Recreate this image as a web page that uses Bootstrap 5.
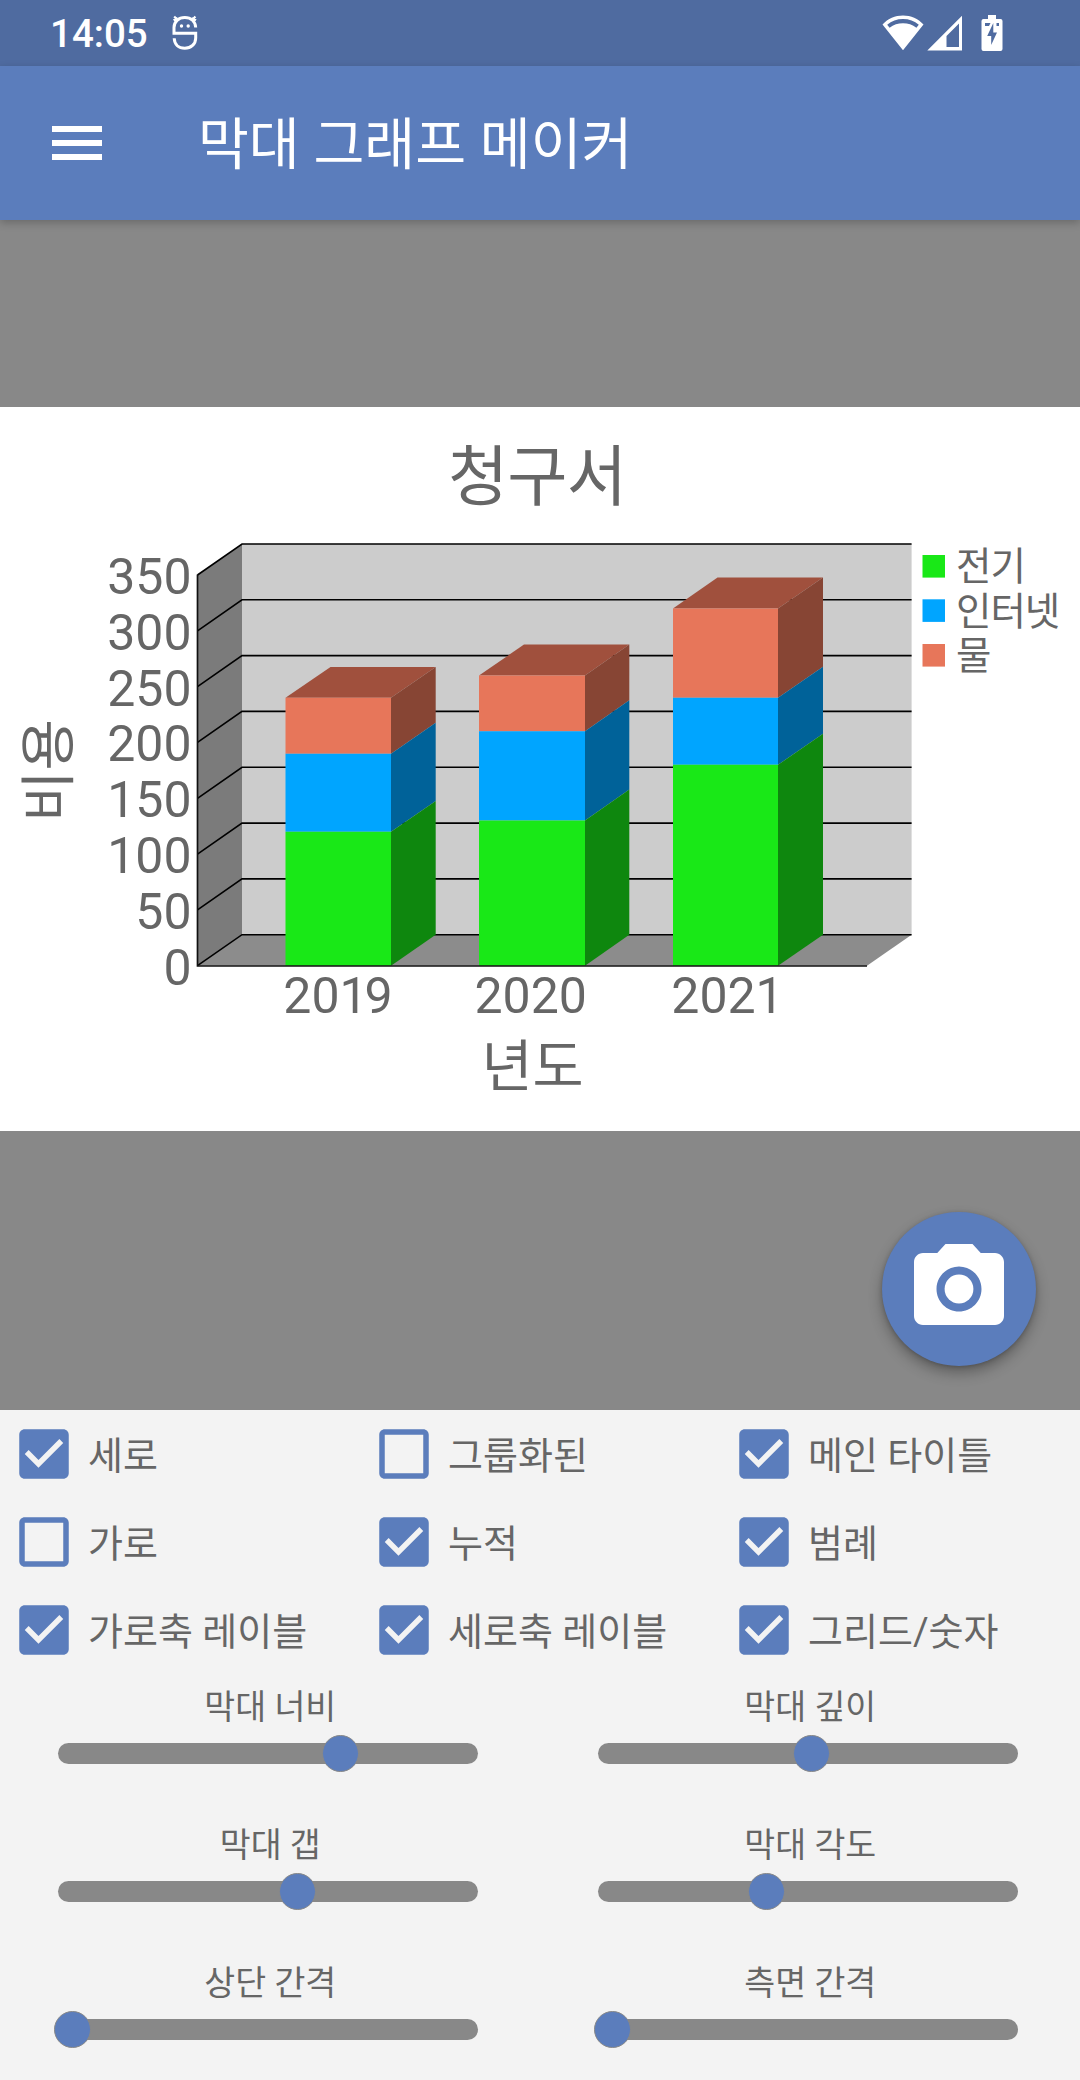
<!DOCTYPE html>
<html lang="ko">
<head>
<meta charset="utf-8">
<meta name="viewport" content="width=device-width, initial-scale=1">
<title>막대 그래프 메이커</title>
<link href="https://cdn.jsdelivr.net/npm/bootstrap@5.3.0/dist/css/bootstrap.min.css" rel="stylesheet">
<style>
  :root { --brand: #5b7dbc; --brand-dark: #4f6ba0; --ink: #666; --track: #888; }
  body { font-family: Roboto, "Noto Sans CJK KR", sans-serif; color: var(--ink); background: #f3f3f3; }
  .status-bar { height: 66px; background: var(--brand-dark); padding: 0 77px 0 50px; }
  .clock { font-size: 38.5px; font-weight: 500; line-height: 66px; padding-top: 2px; width: 122px; }
  .status-icons { gap: 3px; }
  .app-bar { height: 154px; background: var(--brand); padding: 0 52px; box-shadow: 0 3px 8px rgba(0,0,0,.22); z-index: 2; }
  .app-title { font-size: 55.3px; line-height: 80px; margin-left: 96px; padding-top: 5px; font-weight: 400; }
  .stage { height: 1190px; background: var(--track); padding-top: 187px; }
  .chart-text { fill: var(--ink); }
  .fab { right: 44px; bottom: 44px; width: 154px; height: 154px; background: var(--brand); box-shadow: 0 7px 14px rgba(0,0,0,.3), 0 1px 4px rgba(0,0,0,.2); }
  .panel { height: 670px; }
  .option { height: 88px; padding-left: 11px; font-size: 38px; line-height: 60px; gap: 11px; }
  .option svg { fill: var(--brand); flex: none; }
  .option span { padding-top: 3px; }
  .slider-cell { height: 138px; padding: 9px 62.5px 0 58px; }
  .slider-name { font-size: 33.6px; line-height: 50px; margin-left: 5px; }
  .slider-track { height: 21px; background: var(--track); border-radius: 11px; margin-top: 10px; }
  .slider-thumb { width: 37px; height: 37px; top: -8.5px; margin-left: -18.5px; background: var(--brand); border: 1px solid #888; }
</style>
</head>
<body>
<header>
  <div class="status-bar d-flex align-items-center text-white">
    <div class="clock">14:05</div>
    <svg width="26" height="36" viewBox="0 0 26 36" fill="none" stroke="#fff" stroke-width="3">
      <path d="M23.700 12.500C23.500 6.500 19 2.500 12.800 2.500S2 6.800 2 12.500V18.200H23.700V23C23.700 29.200 19 33.200 12.800 33.200S2.500 29.500 2.200 23.300"/>
      <path d="M2.200 1.500 5.500 5.200M1.500 5 5.500 3M23.400 1.500 20.100 5.200M24.100 5 20.100 3" stroke-width="2.200"/>
      <g fill="#fff" stroke="none"><circle cx="9.500" cy="11" r="1.700"/><circle cx="16.200" cy="11" r="1.700"/></g>
    </svg>
    <div class="status-icons d-flex align-items-center ms-auto">
      <svg width="42" height="36" viewBox="0 0 42 36" fill="#fff"><path fill-rule="evenodd" d="M.5 9.500C6 3.500 13 .5 21 .5s15 3 20.500 9L21 35.200ZM5.200 9.700 7.600 12.800C11.500 9.500 16 8.200 21 8.200s9.500 1.300 13.400 4.600L36.800 9.700C32.500 6 27 4.100 21 4.100S9.500 6 5.200 9.700Z"/></svg>
      <svg width="35" height="36" viewBox="0 0 35 36" fill="#fff"><path fill-rule="evenodd" d="M35 .8V35.500H.3ZM32 8.500 19.500 21V32H32Z"/></svg>
      <svg class="ms-3" width="22" height="36" viewBox="0 0 22 36"><path fill="#fff" d="M7 0h8v4h4.500a2 2 0 0 1 2 2v28a2 2 0 0 1-2 2H2.500a2 2 0 0 1-2-2V6a2 2 0 0 1 2-2H7Z"/><path fill="#4f6ba0" d="M4 8h5.500L8 11H4ZM15.500 8H18v3h-2.500ZM12.300 8 6.200 21h4v9l5.800-12.500h-3.700Z"/></svg>
    </div>
  </div>
  <nav class="app-bar d-flex align-items-center text-white position-relative">
    <svg width="50" height="34" viewBox="0 0 50 34" fill="#fff"><path d="M0 0h50v6H0ZM0 14h50v6H0ZM0 28h50v6H0Z"/></svg>
    <h1 class="app-title mb-0">막대 그래프 메이커</h1>
  </nav>
</header>

<main>
  <section class="stage position-relative">
    <svg class="d-block bg-white" width="1080" height="724" viewBox="0 407 1080 724">
      <!-- walls and floor -->
      <path fill="#7b7b7b" d="M197.500 575 242 544V934.700L197.500 965.700Z"/>
      <path fill="#ccc" d="M242 544H911.600V934.700H242Z"/>
      <path fill="#8c8c8c" d="M242 934.700H911.600L867 965.700H197.500Z"/>
      <path fill="none" stroke="#000" stroke-width="1.600" d="M197.500 575 242 544H911.600M197.500 630.800 242 599.800H911.600M197.500 686.600 242 655.600H911.600M197.500 742.400 242 711.400H911.600M197.500 798.300 242 767.300H911.600M197.500 854.100 242 823.100H911.600M197.500 909.900 242 878.900H911.600M197.500 965.700 242 934.700H911.600"/>
      <!-- 2019 -->
      <path fill="#a0503d" d="M285.500 697.800 330.500 667H435.700L391 697.800Z"/>
      <path fill="#874534" d="M391 697.800 435.700 667V722.700L391 753.700Z"/>
      <path fill="#006299" d="M391 753.700 435.700 722.700V801L391 831.800Z"/>
      <path fill="#0e870e" d="M391 831.800 435.700 801V934.700L391 965.700Z"/>
      <path fill="#e7765a" d="M285.500 697.800H391V753.700H285.500Z"/>
      <path fill="#00a5ff" d="M285.500 753.700H391V831.800H285.500Z"/>
      <path fill="#19e817" d="M285.500 831.800H391V965.700H285.500Z"/>
      <!-- 2020 -->
      <path fill="#a0503d" d="M479 675.500 524 644.500H629.300L585 675.500Z"/>
      <path fill="#874534" d="M585 675.500 629.300 644.500V700.300L585 731.300Z"/>
      <path fill="#006299" d="M585 731.300 629.300 700.300V789.600L585 820.600Z"/>
      <path fill="#0e870e" d="M585 820.600 629.300 789.600V934.700L585 965.700Z"/>
      <path fill="#e7765a" d="M479 675.500H585V731.300H479Z"/>
      <path fill="#00a5ff" d="M479 731.300H585V820.600H479Z"/>
      <path fill="#19e817" d="M479 820.600H585V965.700H479Z"/>
      <!-- 2021 -->
      <path fill="#a0503d" d="M673 608.500 717.500 577.500H823L778 608.500Z"/>
      <path fill="#874534" d="M778 608.500 823 577.500V666.800L778 697.800Z"/>
      <path fill="#006299" d="M778 697.800 823 666.800V733.800L778 764.800Z"/>
      <path fill="#0e870e" d="M778 764.800 823 733.800V934.700L778 965.700Z"/>
      <path fill="#e7765a" d="M673 608.500H778V697.800H673Z"/>
      <path fill="#00a5ff" d="M673 697.800H778V764.800H673Z"/>
      <path fill="#19e817" d="M673 764.800H778V965.700H673Z"/>
      <path fill="none" stroke="#111" stroke-width="1.700" d="M197.500 574.500V966H867"/>
      <!-- legend -->
      <path fill="#19e817" d="M922.500 555H945v22.600H922.500Z"/>
      <path fill="#00a5ff" d="M922.500 599.300H945v22.600H922.500Z"/>
      <path fill="#e7765a" d="M922.500 644H945v22.600H922.500Z"/>
      <g class="chart-text" font-size="38.500" letter-spacing="-1">
        <text x="956" y="579.500">전기</text><text x="956" y="624.500">인터넷</text><text x="956" y="668.500">물</text>
      </g>
      <g class="chart-text" font-size="50" text-anchor="end">
        <text x="191.500" y="594">350</text><text x="191.500" y="650">300</text><text x="191.500" y="706">250</text><text x="191.500" y="761">200</text><text x="191.500" y="817">150</text><text x="191.500" y="873">100</text><text x="191.500" y="929">50</text><text x="191.500" y="985">0</text>
      </g>
      <g class="chart-text" font-size="50" text-anchor="middle">
        <text x="338" y="1012.500">201<tspan dx="-3">9</tspan></text><text x="530.700" y="1012.500">2020</text><text x="727.500" y="1012.500">2021</text>
      </g>
      <g class="chart-text" text-anchor="middle">
        <text x="537" y="500" font-size="65.500" letter-spacing="-1">청구서</text>
        <text x="532.500" y="1086" font-size="55.500">년도</text>
        <text font-size="56" transform="translate(68 770.500) rotate(-90)">비용</text>
      </g>
    </svg>
    <button type="button" class="fab btn rounded-circle border-0 p-0 position-absolute d-flex align-items-center justify-content-center" aria-label="사진 저장">
      <svg width="108" height="108" viewBox="0 0 24 24" fill="#fff"><circle cx="12" cy="12" r="3.200"/><path d="M9 2L7.170 4H4c-1.100 0-2 .9-2 2v12c0 1.100.9 2 2 2h16c1.100 0 2-.9 2-2V6c0-1.100-.9-2-2-2h-3.170L15 2H9zm3 15c-2.760 0-5-2.240-5-5s2.240-5 5-5 5 2.240 5 5-2.240 5-5 5z"/></svg>
    </button>
  </section>

  <section class="panel">
    <svg class="d-none">
      <symbol id="on" viewBox="0 0 24 24"><path d="M19 3H5c-1.110 0-2 .9-2 2v14c0 1.100.89 2 2 2h14c1.110 0 2-.9 2-2V5c0-1.100-.89-2-2-2zm-9 14l-5-5 1.410-1.410L10 14.170l7.590-7.590L19 8l-9 9z"/></symbol>
      <symbol id="off" viewBox="0 0 24 24"><path d="M19 5v14H5V5h14m0-2H5c-1.100 0-2 .9-2 2v14c0 1.100.9 2 2 2h14c1.100 0 2-.9 2-2V5c0-1.100-.9-2-2-2z"/></symbol>
    </svg>
    <div class="row g-0">
      <div class="col-4 option d-flex align-items-center"><svg width="66" height="66"><use href="#on"/></svg><span>세로</span></div>
      <div class="col-4 option d-flex align-items-center"><svg width="66" height="66"><use href="#off"/></svg><span>그룹화된</span></div>
      <div class="col-4 option d-flex align-items-center"><svg width="66" height="66"><use href="#on"/></svg><span>메인 타이틀</span></div>
      <div class="col-4 option d-flex align-items-center"><svg width="66" height="66"><use href="#off"/></svg><span>가로</span></div>
      <div class="col-4 option d-flex align-items-center"><svg width="66" height="66"><use href="#on"/></svg><span>누적</span></div>
      <div class="col-4 option d-flex align-items-center"><svg width="66" height="66"><use href="#on"/></svg><span>범례</span></div>
      <div class="col-4 option d-flex align-items-center"><svg width="66" height="66"><use href="#on"/></svg><span>가로축 레이블</span></div>
      <div class="col-4 option d-flex align-items-center"><svg width="66" height="66"><use href="#on"/></svg><span>세로축 레이블</span></div>
      <div class="col-4 option d-flex align-items-center"><svg width="66" height="66"><use href="#on"/></svg><span>그리드/숫자</span></div>
    </div>
    <div class="row g-0">
      <div class="col-6 slider-cell"><div class="slider-name text-center">막대 너비</div><div class="slider-track position-relative"><div class="slider-thumb rounded-circle position-absolute" style="left:67.4%"></div></div></div>
      <div class="col-6 slider-cell"><div class="slider-name text-center">막대 깊이</div><div class="slider-track position-relative"><div class="slider-thumb rounded-circle position-absolute" style="left:50.9%"></div></div></div>
      <div class="col-6 slider-cell"><div class="slider-name text-center">막대 갭</div><div class="slider-track position-relative"><div class="slider-thumb rounded-circle position-absolute" style="left:57%"></div></div></div>
      <div class="col-6 slider-cell"><div class="slider-name text-center">막대 각도</div><div class="slider-track position-relative"><div class="slider-thumb rounded-circle position-absolute" style="left:40.2%"></div></div></div>
      <div class="col-6 slider-cell"><div class="slider-name text-center">상단 간격</div><div class="slider-track position-relative"><div class="slider-thumb rounded-circle position-absolute" style="left:3.500%"></div></div></div>
      <div class="col-6 slider-cell"><div class="slider-name text-center">측면 간격</div><div class="slider-track position-relative"><div class="slider-thumb rounded-circle position-absolute" style="left:3.500%"></div></div></div>
    </div>
  </section>
</main>
<script src="https://cdn.jsdelivr.net/npm/bootstrap@5.3.0/dist/js/bootstrap.bundle.min.js"></script>
</body>
</html>
